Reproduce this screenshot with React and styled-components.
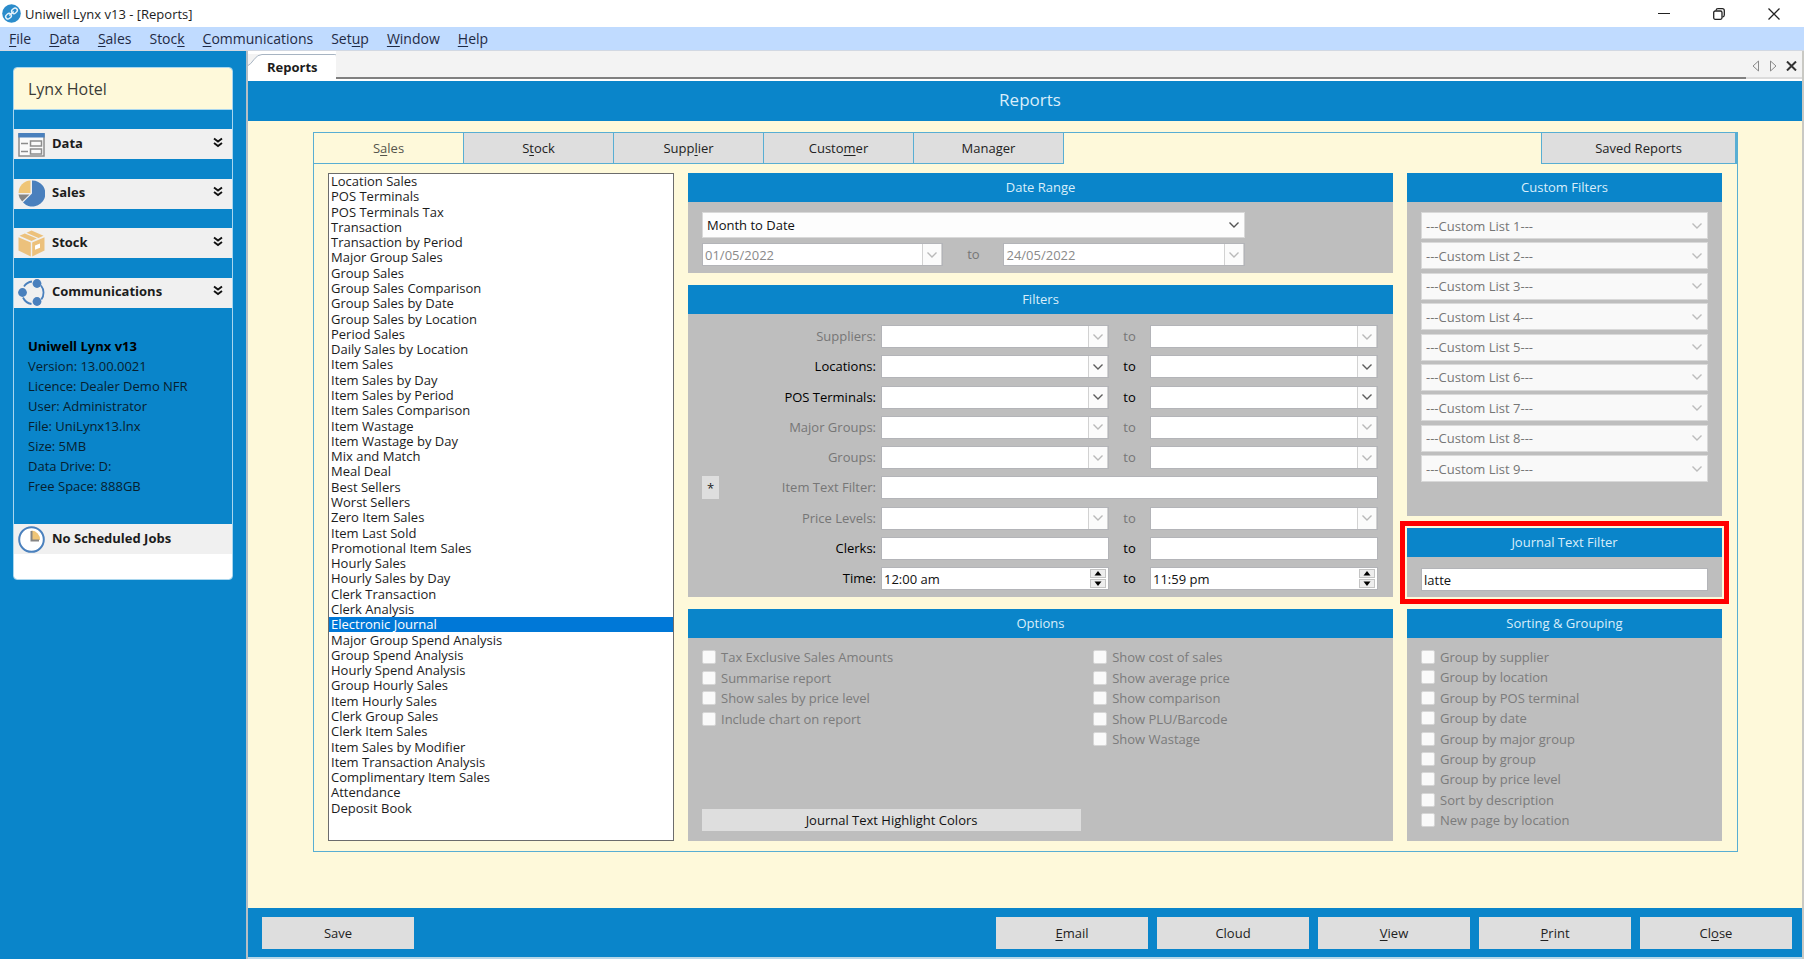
/* eslint-disable react/prop-types */
import { useState } from 'react';
import styled, { createGlobalStyle } from 'styled-components';

const BLUE = '#0a85ca';
const CREAM = '#fef9da';
const LINE = '#58aed3';

const GlobalStyle = createGlobalStyle`
  * {
    box-sizing: border-box;
  }
  body {
    margin: 0;
    background: ${BLUE};
    color: #1c1c1c;
    font: 13px/18px "Open Sans", "Noto Sans", sans-serif;
  }
  button, input, select {
    margin: 0;
    padding: 0;
    border: 0;
    border-radius: 0;
    color: inherit;
    font: inherit;
    outline: none;
  }
  ul {
    margin: 0;
    padding: 0;
    list-style: none;
  }
  u {
    text-underline-offset: 2px;
  }
`;

const Window = styled.div`
  display: flex;
  flex-direction: column;
  min-height: 100vh;
`;
const TitleBar = styled.header`
  display: flex;
  align-items: center;
  height: 27px;
  padding: 0 3px 0 2px;
  background: #fff;
`;
const WindowTitle = styled.span`
  flex: 1;
  padding-left: 4px;
`;
const WindowButton = styled.button`
  display: grid;
  place-items: center;
  width: 55px;
  height: 27px;
  background: none;
`;
const MenuBar = styled.nav`
  display: flex;
  align-items: center;
  gap: 18px;
  height: 24px;
  padding: 0 9px;
  border-bottom: 1px solid #d2d8e2;
  background: #c0dbff;
  font-size: 14px;
`;
const MenuLink = styled.a`
  color: #1f2a44;
  text-decoration: none;
`;
const Workspace = styled.div`
  display: flex;
  flex: 1;
`;

const Sidebar = styled.aside`
  width: 246px;
  padding: 16px 13px 0 13px;
`;
const SideCard = styled.div`
  overflow: hidden;
  border: 1px solid #a9d6ee;
  border-radius: 4px;
  background: ${BLUE};
`;
const SiteName = styled.div`
  height: 42px;
  padding: 0 14px;
  border-bottom: 1px solid #a9d6ee;
  background: ${CREAM};
  color: #3c3c36;
  font-size: 16px;
  line-height: 42px;
`;
const NavList = styled.ul`
  display: flex;
  flex-direction: column;
  justify-content: space-between;
  height: 198px;
  padding-top: 19px;
`;
const NavButton = styled.button`
  display: flex;
  align-items: center;
  width: 100%;
  height: 30px;
  padding: 0 9px 0 4px;
  background: #f0f0f0;
  font-weight: 700;
  text-align: left;

  span {
    flex: 1;
    padding: 0 0 3px 7px;
  }
`;
const Info = styled.div`
  padding: 28px 14px;
  color: #06202f;
  line-height: 20px;

  strong {
    display: block;
    color: #000;
  }
`;
const Jobs = styled.div`
  padding-bottom: 25px;
  background: #fff;
`;

const Main = styled.main`
  display: flex;
  flex: 1;
  flex-direction: column;
  min-width: 0;
  border: solid #b4bfc6;
  border-width: 0 2px;
  border-right-color: #c9c9c4;
  background: ${CREAM};
`;
const DocTabs = styled.div`
  display: flex;
  align-items: flex-end;
  height: 30px;
  padding-bottom: 2px;
  background: #fff;
`;
const DocTab = styled.button`
  display: flex;
  height: 25px;
  padding-right: 18px;
  border-right: 1px solid #a7b4c2;
  border-radius: 0 3px 0 0;
  background: linear-gradient(#a7b4c2, #a7b4c2) 14px 0 / 100% 1px no-repeat #fff;
  font-weight: 700;
  line-height: 26px;

  svg {
    margin-right: 5px;
  }
`;
const DocStrip = styled.div`
  display: flex;
  flex: 1;
  align-self: stretch;
  margin-left: -1px;
  border-bottom: 2px solid #808080;
  background: #f3f3f3;
`;
const DocTools = styled.div`
  display: flex;
  align-items: center;
  align-self: stretch;
  justify-content: space-between;
  width: 56px;
  padding: 4px 5px 0 6px;
  border-bottom: 2px solid #dcdcdc;
  background: #f3f3f3;
`;
const IconButton = styled.button`
  display: grid;
  place-items: center;
  background: none;
`;
const PageTitle = styled.h1`
  height: 40px;
  margin: 0;
  padding-left: 10px;
  background: ${BLUE};
  color: #d9eefa;
  font-size: 17px;
  font-weight: 400;
  line-height: 38px;
  text-align: center;
`;

const Frame = styled.section`
  margin: 11px 64px 0 65px;
  border: 1px solid ${LINE};
`;
const Tabs = styled.div`
  display: flex;
  height: 31px;
`;
const Tab = styled.button`
  width: 150px;
  border: solid ${LINE};
  border-width: 0 1px 1px 0;
  background: ${p => (p.$active ? CREAM : '#dedede')};
  color: ${p => (p.$active ? '#55554c' : '#222')};
`;
const SavedTab = styled(Tab)`
  width: 196px;
  margin-left: auto;
  border-width: 0 2px 1px 1px;
`;
const FrameBody = styled.div`
  display: grid;
  grid-template-columns: 346px minmax(0, 1fr) 315px;
  gap: 14px;
  padding: 9px 15px 10px 14px;
`;
const ReportList = styled.ul`
  display: grid;
  grid-template-rows: repeat(42, 1fr);
  padding-bottom: 24px;
  border: 1px solid #6c6c6c;
  background: #fff;
`;
const ReportItem = styled.li`
  height: 15px;
  padding-left: 2px;
  background: ${p => (p.$selected ? '#0078d7' : 'none')};
  color: ${p => (p.$selected ? '#fff' : '#1c1c1c')};
  line-height: 15px;
  cursor: default;
`;
const Column = styled.div`
  display: flex;
  flex-direction: column;
  gap: 12px;
`;
const Panel = styled.section`
  background: #bebebe;
  outline: ${p => (p.$marked ? '5px solid #f00' : 'none')};
  outline-offset: 2px;
`;
const PanelTitle = styled.h2`
  height: 29px;
  margin: 0;
  background: ${BLUE};
  color: #d9eefa;
  font-size: 13px;
  font-weight: 400;
  line-height: 29px;
  text-align: center;
`;

const DateBody = styled.div`
  display: grid;
  gap: 5px;
  width: 79%;
  padding: 10px 0 7px 14px;
`;
const DateRow = styled.div`
  display: grid;
  grid-template-columns: 1fr 60px 1fr;
`;
const Word = styled.span`
  color: ${p => (p.$off ? '#767676' : '#000')};
  line-height: 23px;
  text-align: center;
`;
const Field = styled.div`
  display: flex;
  height: 23px;
  border: 1px solid #b3b4b8;
  background: #fff;
`;
const TextInput = styled.input`
  flex: 1;
  min-width: 0;
  padding-left: 2px;
  background: #fff;
  color: #111;

  &:disabled {
    color: #8a8a8a;
  }
`;
const DropButton = styled.button`
  display: grid;
  place-items: center;
  width: 20px;
  border: 1px solid #d2d2d2;
  border-width: 0 1px;
  background: #fbfbfb;
  color: #5c5c5c;

  &:disabled {
    color: #b9b9b9;
  }
`;
const Spinner = styled.span`
  display: grid;
  gap: 1px;
  width: 19px;
  padding: 1px 2px 1px 1px;

  button {
    display: grid;
    place-items: center;
    border: 1px solid #c4c4c4;
    background: #ededed;
  }
`;
/* the arrow shares the grid cell with the select */
const SelectBox = styled.div`
  display: grid;
  grid-template-columns: minmax(0, 1fr);
  align-items: center;
  justify-items: end;
  height: ${p => p.$height}px;
  border: 1px solid #d9d9d9;
  background: ${p => (p.$off ? '#f9f9f9' : '#fdfdfd')};
  color: ${p => (p.$off ? '#bcbcbc' : '#555')};

  select, svg {
    grid-area: 1 / 1;
  }
  svg {
    margin-right: 4px;
    pointer-events: none;
  }
  select {
    width: 100%;
    padding-left: 4px;
    appearance: none;
    background: transparent;
    color: ${p => (p.$off ? '#767676' : '#111')};
    opacity: 1;
  }
`;

const FilterGrid = styled.div`
  display: grid;
  align-content: space-between;
  height: 283px;
  padding: 11px 15px 7px 14px;
`;
const FilterRow = styled.div`
  display: grid;
  grid-template-columns: 17px 162px 1fr 41px 1fr;
  height: 23px;

  label {
    grid-column: 2;
    padding-right: 5px;
    color: ${p => (p.$off ? '#767676' : '#000')};
    line-height: 23px;
    text-align: right;
  }
`;
const StarButton = styled.button`
  background: #dedede;
  color: #222;
  line-height: 18px;
`;
const WideField = styled(Field)`
  grid-column: 3 / -1;
`;

const OptionsBody = styled.div`
  display: flex;
  flex-direction: column;
  justify-content: space-between;
  height: 203px;
  padding: 9px 14px 10px;
`;
const OptionColumns = styled.div`
  display: grid;
  grid-template-columns: 26fr 19fr;
`;
const CheckList = styled.div`
  display: grid;
  grid-template-rows: repeat(5, 20px);
  align-content: space-between;
  height: 102px;
`;
const SortList = styled.div`
  display: grid;
  align-content: space-between;
  height: 203px;
  padding: 9px 14px 11px;
`;
const Check = styled.label`
  display: flex;
  align-items: center;
  gap: 5px;
  height: 20px;
  color: #7b7b7b;

  input {
    width: 14px;
    height: 14px;
    appearance: none;
    border: 1px solid #d6d6d6;
    border-radius: 2px;
    background: #fafafa;
  }
`;
const ColorsButton = styled.button`
  width: 56%;
  height: 22px;
  background: #dedede;
  color: #111;
`;
const CustomLists = styled.div`
  display: grid;
  align-content: space-between;
  height: 314px;
  padding: 10px 14px 34px;
`;
const JournalBody = styled.div`
  display: grid;
  padding: 11px 14px 6px;
`;

const Footer = styled.footer`
  display: flex;
  gap: 9px;
  height: 51px;
  margin-top: auto;
  padding: 9px 10px 0 14px;
  border-bottom: 2px solid #b7d7e8;
  background: ${BLUE};
`;
const FooterButton = styled.button`
  width: 152px;
  height: 32px;
  margin-right: ${p => (p.$first ? 'auto' : 0)};
  background: #dedede;
  color: #222;
`;

const menu = [
  ['', 'F', 'ile'], ['', 'D', 'ata'], ['', 'S', 'ales'], ['Stoc', 'k', ''],
  ['', 'C', 'ommunications'], ['Set', 'u', 'p'], ['', 'W', 'indow'], ['', 'H', 'elp'],
];
const tabs = [
  ['S', 'a', 'les'], ['S', 't', 'ock'], ['Supp', 'l', 'ier'], ['Custo', 'm', 'er'], ['Manager', '', ''],
];
const footer = [
  ['Save', '', ''], ['', 'E', 'mail'], ['Cloud', '', ''], ['', 'V', 'iew'], ['', 'P', 'rint'], ['Cl', 'o', 'se'],
];
const reports = [
  'Location Sales', 'POS Terminals', 'POS Terminals Tax', 'Transaction', 'Transaction by Period',
  'Major Group Sales', 'Group Sales', 'Group Sales Comparison', 'Group Sales by Date',
  'Group Sales by Location', 'Period Sales', 'Daily Sales by Location', 'Item Sales',
  'Item Sales by Day', 'Item Sales by Period', 'Item Sales Comparison', 'Item Wastage',
  'Item Wastage by Day', 'Mix and Match', 'Meal Deal', 'Best Sellers', 'Worst Sellers',
  'Zero Item Sales', 'Item Last Sold', 'Promotional Item Sales', 'Hourly Sales',
  'Hourly Sales by Day', 'Clerk Transaction', 'Clerk Analysis', 'Electronic Journal',
  'Major Group Spend Analysis', 'Group Spend Analysis', 'Hourly Spend Analysis',
  'Group Hourly Sales', 'Item Hourly Sales', 'Clerk Group Sales', 'Clerk Item Sales',
  'Item Sales by Modifier', 'Item Transaction Analysis', 'Complimentary Item Sales',
  'Attendance', 'Deposit Book',
];
const filters = [
  { label: 'Suppliers', kind: 'combo', off: true },
  { label: 'Locations', kind: 'combo' },
  { label: 'POS Terminals', kind: 'combo' },
  { label: 'Major Groups', kind: 'combo', off: true },
  { label: 'Groups', kind: 'combo', off: true },
  { label: 'Item Text Filter', kind: 'wide', off: true },
  { label: 'Price Levels', kind: 'combo', off: true },
  { label: 'Clerks', kind: 'text' },
  { label: 'Time', kind: 'time', from: '12:00 am', to: '11:59 pm' },
];
const optionsLeft = [
  'Tax Exclusive Sales Amounts', 'Summarise report', 'Show sales by price level', 'Include chart on report',
];
const optionsRight = [
  'Show cost of sales', 'Show average price', 'Show comparison', 'Show PLU/Barcode', 'Show Wastage',
];
const sorting = [
  'Group by supplier', 'Group by location', 'Group by POS terminal', 'Group by date',
  'Group by major group', 'Group by group', 'Group by price level', 'Sort by description',
  'New page by location',
];

function Hot({ parts }) {
  const [before, key, after] = parts;
  return (
    <>
      {before}
      {key && <u>{key}</u>}
      {after}
    </>
  );
}

function Chevron() {
  return (
    <svg width="12" height="8" viewBox="0 0 12 8" fill="none" stroke="currentColor" strokeWidth="1.4">
      <path d="M1.5 1.5 6 6l4.5-4.5" />
    </svg>
  );
}

function DoubleChevron() {
  return (
    <svg width="10" height="15" viewBox="0 0 10 15" fill="none" stroke="#111" strokeWidth="1.9">
      <path d="M1 1.500l4 3 4-3M1 6l4 3 4-3" />
    </svg>
  );
}

function LogoIcon() {
  return (
    <svg width="19" height="19" viewBox="0 0 19 19" fill="none">
      <circle cx="9.5" cy="9.5" r="9.3" fill="#2b8ccb" />
      <g stroke="#e6f3fb" strokeWidth="1.4" transform="rotate(-42 9.5 9.5)">
        <rect x="2.5" y="7.2" width="6" height="4.6" rx="2.3" />
        <rect x="10.5" y="7.2" width="6" height="4.6" rx="2.3" />
        <path d="M6.5 9.5h6" />
      </g>
    </svg>
  );
}

function FormIcon() {
  return (
    <svg width="27" height="27" viewBox="0 0 27 27" fill="none" stroke="#8c8c8c">
      <rect x="1" y="3" width="25" height="22" fill="#fafafa" strokeWidth="1.5" />
      <path d="M.3 2h26.4v4.5H.3z" fill="#4a80bd" stroke="none" />
      <path d="M3 12.5h7M3 20.5h7" strokeWidth="1.5" />
      <rect x="12.5" y="10" width="11" height="5" strokeWidth="1.5" />
      <rect x="12.5" y="18" width="11" height="5" strokeWidth="1.5" />
    </svg>
  );
}

function PieIcon() {
  return (
    <svg width="27" height="27" viewBox="0 0 27 27">
      <path d="M14 .5A13 13 0 1 1 5 22.5L14 13.5z" fill="#4a80bd" />
      <path d="M12.5 .5V13H.5A12.5 12.5 0 0 1 12.5 .5z" fill="#efc577" />
      <path d="M.5 14.5h11L4.2 21.6A12 12 0 0 1 .5 14.5z" fill="#858585" />
    </svg>
  );
}

function BoxIcon() {
  return (
    <svg width="27" height="27" viewBox="0 0 27 27" fill="#ecc17c">
      <path d="M.5 7.2 12.8 12.4V26.5L.5 20.5z" />
      <path d="M26.5 7.2 14.2 12.4V26.5l12.3-6z" />
      <path d="M1.5 5.8 6.8 3.5l12 5.1-5.3 2.4z" />
      <path d="M8.5 2.8 13.5 .5 25.5 5.8l-5 2.1z" />
      <path d="M17 15.5l5-2v4.2l-5 2z" fill="#fff" />
    </svg>
  );
}

function NetworkIcon() {
  return (
    <svg width="27" height="27" viewBox="0 0 27 27" fill="#4a80bd">
      <g fill="none" stroke="#4a80bd" strokeWidth="1.8">
        <path d="M6 7.5A11.5 11.5 0 0 1 14 2.5" />
        <path d="M23 6.5a11.5 11.5 0 0 1 .3 14" />
        <path d="M13.5 25A11.5 11.5 0 0 1 5 18.5" />
      </g>
      <circle cx="19" cy="4.5" r="4.4" />
      <circle cx="4.5" cy="13.5" r="4.4" />
      <circle cx="19" cy="22.5" r="4.4" />
    </svg>
  );
}

function ClockIcon() {
  return (
    <svg width="27" height="27" viewBox="0 0 27 27" fill="none">
      <circle cx="13.5" cy="13.5" r="12.3" fill="#fff" stroke="#4a80bd" strokeWidth="2" />
      <path d="M13.5 4.5a9 9 0 0 1 8.5 9.5h-8.500z" fill="#efc577" />
      <path d="M13.5 5v9.5H21" stroke="#858585" strokeWidth="2" />
    </svg>
  );
}

const navItems = [
  ['Data', FormIcon],
  ['Sales', PieIcon],
  ['Stock', BoxIcon],
  ['Communications', NetworkIcon],
];

function ComboField({ label, value = '', off, id }) {
  return (
    <Field>
      <TextInput id={id} aria-label={label} defaultValue={value} disabled={off} />
      <DropButton type="button" aria-label={`Open ${label}`} disabled={off}>
        <Chevron />
      </DropButton>
    </Field>
  );
}

function TimeField({ label, value, id }) {
  return (
    <Field>
      <TextInput id={id} aria-label={label} defaultValue={value} />
      <Spinner>
        <button type="button" aria-label="Later">
          <svg width="8" height="5"><path d="M4 0l3.500 4.500h-7z" /></svg>
        </button>
        <button type="button" aria-label="Earlier">
          <svg width="8" height="5"><path d="M4 5L.5 .5h7z" /></svg>
        </button>
      </Spinner>
    </Field>
  );
}

function FilterCell({ filter, end, id }) {
  const label = `${filter.label} ${end}`;
  if (filter.kind === 'combo') return <ComboField id={id} label={label} off={filter.off} />;
  if (filter.kind === 'time') return <TimeField id={id} label={label} value={filter[end]} />;
  return <Field><TextInput id={id} aria-label={label} /></Field>;
}

function Filter({ filter }) {
  const id = filter.label.toLowerCase().replace(/ /g, '-');
  return (
    <FilterRow $off={filter.off}>
      {filter.kind === 'wide' && <StarButton type="button">*</StarButton>}
      <label htmlFor={id}>{`${filter.label}:`}</label>
      {filter.kind === 'wide' ? (
        <WideField><TextInput id={id} disabled /></WideField>
      ) : (
        <>
          <FilterCell filter={filter} end="from" id={id} />
          <Word $off={filter.off}>to</Word>
          <FilterCell filter={filter} end="to" />
        </>
      )}
    </FilterRow>
  );
}

function Option({ text }) {
  return (
    <Check>
      <input type="checkbox" disabled />
      {text}
    </Check>
  );
}

function SidePanel() {
  return (
    <Sidebar>
      <SideCard>
        <SiteName>Lynx Hotel</SiteName>
        <NavList>
          {navItems.map(([name, Icon]) => (
            <li key={name}>
              <NavButton type="button">
                <Icon />
                <span>{name}</span>
                <DoubleChevron />
              </NavButton>
            </li>
          ))}
        </NavList>
        <Info>
          <strong>Uniwell Lynx v13</strong>
          <div>Version: 13.00.0021</div>
          <div>Licence: Dealer Demo NFR</div>
          <div>User: Administrator</div>
          <div>File: UniLynx13.lnx</div>
          <div>Size: 5MB</div>
          <div>Data Drive: D:</div>
          <div>Free Space: 888GB</div>
        </Info>
        <Jobs>
          <NavButton type="button">
            <ClockIcon />
            <span>No Scheduled Jobs</span>
          </NavButton>
        </Jobs>
      </SideCard>
    </Sidebar>
  );
}

export default function App() {
  const [report, setReport] = useState('Electronic Journal');

  return (
    <Window>
      <GlobalStyle />
      <TitleBar>
        <LogoIcon />
        <WindowTitle>Uniwell Lynx v13 - [Reports]</WindowTitle>
        <WindowButton type="button" aria-label="Minimize">
          <svg width="12" height="12" stroke="#222"><path d="M0 5.5h12" /></svg>
        </WindowButton>
        <WindowButton type="button" aria-label="Restore">
          <svg width="12" height="12" viewBox="0 0 12 12" fill="none" stroke="#222" strokeWidth="1.3">
            <rect x=".7" y="3" width="8.3" height="8.3" rx="1.5" />
            <path d="M3 2.5Q3.2 .7 5 .7h4.3q2 0 2 2V7q0 1.8-1.8 2" />
          </svg>
        </WindowButton>
        <WindowButton type="button" aria-label="Close window">
          <svg width="12" height="12" stroke="#222" strokeWidth="1.3"><path d="M.5 .5l11 11M11.5 .5l-11 11" /></svg>
        </WindowButton>
      </TitleBar>
      <MenuBar>
        {menu.map(parts => (
          <MenuLink href="#" key={parts.join('')}><Hot parts={parts} /></MenuLink>
        ))}
      </MenuBar>

      <Workspace>
        <SidePanel />
        <Main>
          <DocTabs>
            <DocTab type="button">
              <svg width="14" height="25" viewBox="0 0 14 25">
                <path d="M0 0h14L9 2.5 3.5 9 0 11.5z" fill="#f3f3f3" />
                <path d="M0 11.5Q2.5 10.5 6 5.5T14 .5" fill="none" stroke="#a7b4c2" />
              </svg>
              Reports
            </DocTab>
            <DocStrip />
            <DocTools>
              <IconButton type="button" aria-label="Previous">
                <svg width="8" height="12" fill="none" stroke="#8a8a8a"><path d="M6.5 1v10L1 6z" /></svg>
              </IconButton>
              <IconButton type="button" aria-label="Next">
                <svg width="8" height="12" fill="none" stroke="#8a8a8a"><path d="M1.5 1v10L7 6z" /></svg>
              </IconButton>
              <IconButton type="button" aria-label="Close tab">
                <svg width="11" height="10" stroke="#333" strokeWidth="2"><path d="M1 .5l9 9M10 .5l-9 9" /></svg>
              </IconButton>
            </DocTools>
          </DocTabs>
          <PageTitle>Reports</PageTitle>

          <Frame>
            <Tabs>
              {tabs.map((parts, i) => (
                <Tab type="button" key={parts.join('')} $active={i === 0}><Hot parts={parts} /></Tab>
              ))}
              <SavedTab type="button">Saved Reports</SavedTab>
            </Tabs>
            <FrameBody>
              <ReportList role="listbox" aria-label="Report">
                {reports.map(name => (
                  <ReportItem
                    key={name}
                    role="option"
                    aria-selected={name === report}
                    $selected={name === report}
                    onClick={() => setReport(name)}
                  >
                    {name}
                  </ReportItem>
                ))}
              </ReportList>

              <Column>
                <Panel>
                  <PanelTitle>Date Range</PanelTitle>
                  <DateBody>
                    <SelectBox $height={26}>
                      <select aria-label="Date range" defaultValue="Month to Date">
                        <option>Month to Date</option>
                      </select>
                      <Chevron />
                    </SelectBox>
                    <DateRow>
                      <ComboField label="Date from" value="01/05/2022" off />
                      <Word $off>to</Word>
                      <ComboField label="Date to" value="24/05/2022" off />
                    </DateRow>
                  </DateBody>
                </Panel>
                <Panel>
                  <PanelTitle>Filters</PanelTitle>
                  <FilterGrid>
                    {filters.map(filter => <Filter key={filter.label} filter={filter} />)}
                  </FilterGrid>
                </Panel>
                <Panel>
                  <PanelTitle>Options</PanelTitle>
                  <OptionsBody>
                    <OptionColumns>
                      <CheckList>{optionsLeft.map(text => <Option key={text} text={text} />)}</CheckList>
                      <CheckList>{optionsRight.map(text => <Option key={text} text={text} />)}</CheckList>
                    </OptionColumns>
                    <ColorsButton type="button">Journal Text Highlight Colors</ColorsButton>
                  </OptionsBody>
                </Panel>
              </Column>

              <Column>
                <Panel>
                  <PanelTitle>Custom Filters</PanelTitle>
                  <CustomLists>
                    {[1, 2, 3, 4, 5, 6, 7, 8, 9].map(n => (
                      <SelectBox key={n} $height={27} $off>
                        <select aria-label={`Custom list ${n}`} disabled>
                          <option>{`---Custom List ${n}---`}</option>
                        </select>
                        <Chevron />
                      </SelectBox>
                    ))}
                  </CustomLists>
                </Panel>
                <Panel $marked>
                  <PanelTitle>Journal Text Filter</PanelTitle>
                  <JournalBody>
                    <Field><TextInput aria-label="Journal text filter" defaultValue="latte" /></Field>
                  </JournalBody>
                </Panel>
                <Panel>
                  <PanelTitle>{'Sorting & Grouping'}</PanelTitle>
                  <SortList>
                    {sorting.map(text => <Option key={text} text={text} />)}
                  </SortList>
                </Panel>
              </Column>
            </FrameBody>
          </Frame>

          <Footer>
            {footer.map((parts, i) => (
              <FooterButton type="button" key={parts.join('')} $first={i === 0}><Hot parts={parts} /></FooterButton>
            ))}
          </Footer>
        </Main>
      </Workspace>
    </Window>
  );
}
